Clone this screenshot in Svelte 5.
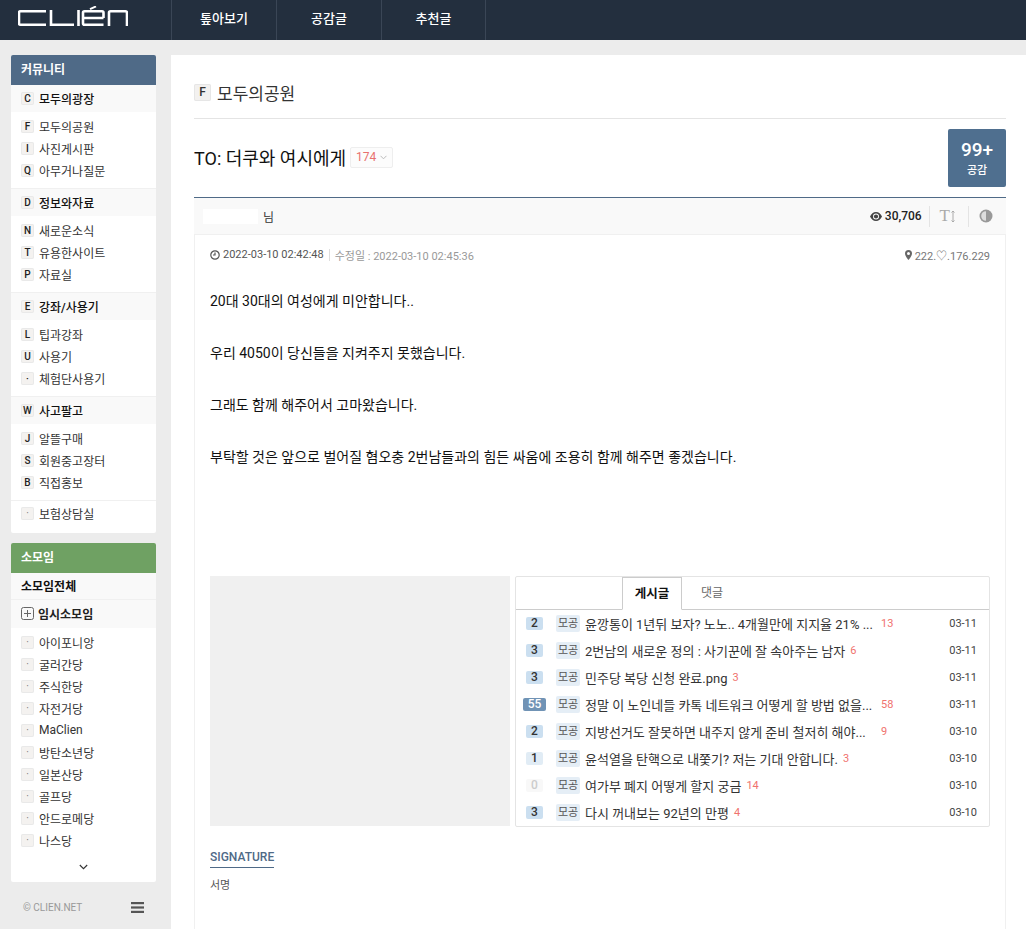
<script>
	const sections = [
		{ head: ['C', '모두의광장'], items: [['F', '모두의공원'], ['I', '사진게시판'], ['Q', '아무거나질문']] },
		{ head: ['D', '정보와자료'], items: [['N', '새로운소식'], ['T', '유용한사이트'], ['P', '자료실']] },
		{ head: ['E', '강좌/사용기'], items: [['L', '팁과강좌'], ['U', '사용기'], ['·', '체험단사용기']] },
		{ head: ['W', '사고팔고'], items: [['J', '알뜰구매'], ['S', '회원중고장터'], ['B', '직접홍보']] }
	];
	const somoim = ['아이포니앙', '굴러간당', '주식한당', '자전거당', 'MaClien', '방탄소년당', '일본산당', '골프당', '안드로메당', '나스당'];
	const paragraphs = [
		'20대 30대의 여성에게 미안합니다..',
		'우리 4050이 당신들을 지켜주지 못했습니다.',
		'그래도 함께 해주어서 고마왔습니다.',
		'부탁할 것은 앞으로 벌어질 혐오충 2번남들과의 힘든 싸움에 조용히 함께 해주면 좋겠습니다.'
	];
	const posts = [
		{ n: 2, lv: 'b', title: '윤깡통이 1년뒤 보자? 노노.. 4개월만에 지지율 21% ...', c: 13, date: '03-11', cut: true },
		{ n: 3, lv: 'b', title: '2번남의 새로운 정의 : 사기꾼에 잘 속아주는 남자', c: 6, date: '03-11' },
		{ n: 3, lv: 'b', title: '민주당 복당 신청 완료.png', c: 3, date: '03-11' },
		{ n: 55, lv: 'd', title: '정말 이 노인네들 카톡 네트워크 어떻게 할 방법 없을...', c: 58, date: '03-11', cut: true },
		{ n: 2, lv: 'b', title: '지방선거도 잘못하면 내주지 않게 준비 철저히 해야...', c: 9, date: '03-10', cut: true },
		{ n: 1, lv: 'a', title: '윤석열을 탄핵으로 내쫓기? 저는 기대 안합니다.', c: 3, date: '03-10' },
		{ n: 0, lv: 'z', title: '여가부 폐지 어떻게 할지 궁금', c: 14, date: '03-10' },
		{ n: 3, lv: 'b', title: '다시 꺼내보는 92년의 만평', c: 4, date: '03-10' }
	];
</script>

<header class="top">
	<a class="logo" href="/" aria-label="CLIEN">
		<svg width="110" height="28" viewBox="0 0 110 28" fill="none" stroke="#fff" stroke-width="2.600">
			<path d="M28 5.300H2.500a1.500 1.500 0 0 0-1.500 1.500v10.400a1.500 1.500 0 0 0 1.500 1.500H28" />
			<path d="M33 4v14.700H56" />
			<path d="M60.500 4v16" />
			<path d="M65 12H85.500M85.500 18.700H66.500a1.500 1.500 0 0 1-1.500-1.500V6.800a1.500 1.500 0 0 1 1.500-1.500H84a1.500 1.500 0 0 1 1.500 1.500V12" />
			<path d="M72 3.200 78 .4" stroke-width="2" />
			<path d="M91 20V6.800a1.500 1.500 0 0 1 1.500-1.500h15a1.500 1.500 0 0 1 1.500 1.500V20" />
		</svg>
	</a>
	<nav class="menu">
		<a href="/">톺아보기</a>
		<a href="/">공감글</a>
		<a href="/">추천글</a>
	</nav>
</header>

<div class="page">
	<aside class="side">
		<div class="card">
			<h3 class="card-head blue">커뮤니티</h3>
			{#each sections as s}
				<div class="group"><span class="key">{s.head[0]}</span>{s.head[1]}</div>
				<ul class="links">
					{#each s.items as it}
						<li><span class="key">{it[0]}</span>{it[1]}</li>
					{/each}
				</ul>
			{/each}
			<ul class="links last">
				<li><span class="key dot">·</span>보험상담실</li>
			</ul>
		</div>

		<div class="card second">
			<h3 class="card-head green">소모임</h3>
			<div class="group all">소모임전체</div>
			<div class="group temp">
				<svg width="13" height="13" viewBox="0 0 13 13" fill="none" stroke="#666" stroke-width="1">
					<rect x="0.500" y="0.500" width="12" height="12" rx="2" />
					<path d="M6.500 3v7M3 6.500h7" />
				</svg>
				임시소모임
			</div>
			<ul class="links so">
				{#each somoim as name}
					<li><span class="key dot">·</span>{name}</li>
				{/each}
			</ul>
			<div class="more">
				<svg width="9" height="6" viewBox="0 0 9 6" fill="none" stroke="#333" stroke-width="1.100">
					<path d="M.8 1l3.700 3.700L8.200 1" />
				</svg>
			</div>
		</div>

		<div class="side-foot">
			<span>© CLIEN.NET</span>
			<svg width="13" height="11" viewBox="0 0 13 11" fill="#555">
				<rect width="13" height="2.200" /><rect y="4.400" width="13" height="2.200" /><rect y="8.800" width="13" height="2.200" />
			</svg>
		</div>
	</aside>

	<main class="main">
		<div class="board"><span class="board-key">F</span>모두의공원</div>

		<div class="title-row">
			<h1>TO: 더쿠와 여시에게</h1>
			<span class="cmt-count">174
				<svg width="7" height="5" viewBox="0 0 7 5" fill="none" stroke="#bbb" stroke-width="1"><path d="M.5.8l3 3 3-3" /></svg>
			</span>
			<div class="like"><b>99+</b><span>공감</span></div>
		</div>

		<div class="author-bar">
			<span class="nick"><i class="nick-mask"></i>님</span>
			<span class="views">
				<svg width="12" height="9" viewBox="0 0 12 9"><path d="M6 0C3.300 0 1.200 1.800 0 4.500 1.200 7.200 3.300 9 6 9s4.800-1.800 6-4.500C10.800 1.800 8.700 0 6 0z" fill="#444" /><circle cx="6" cy="4.500" r="3" fill="#fff" /><circle cx="6" cy="4.500" r="2.100" fill="#444" /></svg>
				30,706
			</span>
			<span class="tool tool-t">T
				<svg width="4" height="13" viewBox="0 0 4 13" fill="none" stroke="#aaa" stroke-width="1"><path d="M2 1v11M.5 2.500 2 1l1.500 1.500M.5 10.500 2 12l1.500-1.500" /></svg>
			</span>
			<span class="tool">
				<svg width="14" height="14" viewBox="0 0 14 14"><circle cx="7" cy="7" r="6.500" fill="#999" /><path d="M7 2.200a4.800 4.800 0 0 0 0 9.600z" fill="#ddd" /></svg>
			</span>
		</div>

		<article class="body">
			<div class="meta">
				<span class="time">
					<svg width="10" height="10" viewBox="0 0 10 10" fill="none" stroke="#555" stroke-width="1.200"><circle cx="5" cy="5" r="4.200" /><path d="M5 2.500V5H3" /></svg>
					2022-03-10 02:42:48
				</span>
				<span class="edited">수정일 : 2022-03-10 02:45:36</span>
				<span class="ip">
					<svg width="7" height="10" viewBox="0 0 7 10"><path d="M3.500 0A3.500 3.500 0 0 0 0 3.500C0 6 3.500 10 3.500 10S7 6 7 3.500A3.500 3.500 0 0 0 3.500 0zm0 5a1.500 1.500 0 1 1 0-3 1.500 1.500 0 0 1 0 3z" fill="#666" /></svg>
					222.♡.176.229
				</span>
			</div>

			<div class="text">
				{#each paragraphs as p}
					<p>{p}</p>
				{/each}
			</div>

			<div class="lower">
				<div class="ad"></div>
				<section class="panel">
					<div class="tabs">
						<span class="tab on">게시글</span>
						<span class="tab">댓글</span>
					</div>
					<ul class="posts">
						{#each posts as post}
							<li>
								<span class="lv-cell"><span class="lv {post.lv}">{post.n}</span></span>
								<span class="tag">모공</span>
								<span class="ttl" class:cut={post.cut}>{post.title}</span>
								<span class="cnt" class:wide={post.cut}>{post.c}</span>
								<span class="date">{post.date}</span>
							</li>
						{/each}
					</ul>
				</section>
			</div>

			<div class="signature">
				<h4>SIGNATURE</h4>
				<p>서명</p>
			</div>
		</article>
	</main>
</div>

<style>
	:global(body) {
		margin: 0;
		background: #ececec;
		font-family: Roboto, "Noto Sans CJK KR", sans-serif;
		color: #222;
		font-size: 12px;
	}

	a {
		color: inherit;
		text-decoration: none;
	}

	ul {
		list-style: none;
		margin: 0;
		padding: 0;
	}

	.top {
		display: flex;
		height: 40px;
		background: #232f3e;
		color: #fff;
	}

	.logo {
		display: flex;
		align-items: center;
		width: 172px;
		padding-left: 18px;
		box-sizing: border-box;
		border-right: 1px solid #3a4656;
	}

	.menu {
		display: flex;
	}

	.menu a {
		width: 105px;
		height: 40px;
		box-sizing: border-box;
		line-height: 37px;
		text-align: center;
		font-size: 13px;
		font-weight: 500;
		border-right: 1px solid #3a4656;
	}

	.menu a:last-child {
		width: 104px;
	}

	.page {
		display: flex;
		align-items: flex-start;
		padding-top: 15px;
	}

	.side {
		width: 145px;
		margin: 0 15px 0 11px;
		flex: none;
	}

	.card {
		background: #fff;
		border-radius: 2px;
		overflow: hidden;
	}

	.second {
		margin-top: 10px;
	}

	.card-head {
		margin: 0;
		height: 30px;
		line-height: 30px;
		padding-left: 10px;
		color: #fff;
		font-size: 12px;
		font-weight: 700;
	}

	.blue {
		background: #4f6a87;
	}

	.green {
		background: #6fa163;
	}

	.group {
		display: flex;
		align-items: center;
		height: 27px;
		box-sizing: border-box;
		padding: 0 0 1px 10px;
		background: #f9f9f9;
		font-weight: 500;
		font-size: 12px;
		color: #111;
	}

	.group + .links {
		padding: 3px 0 7px;
		border-bottom: 1px solid #f0f0f0;
	}

	.links li {
		display: flex;
		align-items: center;
		height: 22px;
		padding-left: 10px;
		font-size: 12px;
		color: #333;
	}

	.links.last {
		padding: 1px 0 9px;
	}

	.group + .links.so {
		padding: 3px 0 1px;
		border-bottom: 0;
	}

	.key {
		display: inline-block;
		width: 13px;
		height: 13px;
		line-height: 13px;
		margin-right: 5px;
		text-align: center;
		font-size: 10px;
		font-weight: 500;
		color: #222;
		background: #f4f2f0;
		border-radius: 2px;
		box-shadow: inset 0 0 0 1px #e9e9e9;
		flex: none;
	}

	.dot {
		color: #777;
		font-weight: 400;
	}

	.all {
		border-bottom: 1px solid #f0f0f0;
		font-weight: 700;
	}

	.temp {
		height: 28px;
		gap: 4px;
		font-weight: 700;
		color: #222;
	}

	.more {
		display: flex;
		justify-content: center;
		align-items: center;
		height: 30px;
		box-sizing: border-box;
	}

	.side-foot {
		display: flex;
		justify-content: space-between;
		align-items: center;
		padding: 20px 12px 0 12px;
		color: #999;
		font-size: 10px;
	}

	.main {
		flex: 1;
		background: #fff;
		padding: 0 20px 0 23px;
		min-height: 874px;
		box-sizing: border-box;
	}

	.board {
		display: flex;
		align-items: center;
		height: 64px;
		border-bottom: 1px solid #e4e4e4;
		font-size: 17px;
		color: #333;
		padding-top: 12px;
		box-sizing: border-box;
	}

	.board-key {
		width: 17px;
		height: 17px;
		line-height: 17px;
		margin-right: 6px;
		background: #f3f1ef;
		border-radius: 2px;
		box-shadow: inset 0 0 0 1px #e6e6e6;
		text-align: center;
		font-size: 12px;
		font-weight: 500;
	}

	.title-row {
		display: flex;
		align-items: center;
		height: 79px;
		border-bottom: 1px solid #4f6a87;
		box-sizing: border-box;
	}

	h1 {
		margin: 0 0 2px;
		font-size: 18px;
		font-weight: 400;
		color: #111;
	}

	.cmt-count {
		display: inline-flex;
		align-items: center;
		justify-content: center;
		gap: 4px;
		margin: 0 0 2px 4px;
		width: 43px;
		height: 21px;
		box-sizing: border-box;
		border: 1px solid #eee;
		border-radius: 2px;
		background: #fcfcfc;
		font-size: 12px;
		color: #e8716e;
	}

	.like {
		display: flex;
		flex-direction: column;
		align-items: center;
		justify-content: center;
		width: 58px;
		height: 58px;
		margin-left: auto;
		background: #4f6f8f;
		border-radius: 2px;
		color: #fff;
	}

	.like b {
		font-size: 19px;
		font-weight: 500;
		line-height: 24px;
	}

	.like span {
		font-size: 11px;
		font-weight: 500;
		line-height: 17px;
	}

	.author-bar {
		display: flex;
		align-items: center;
		height: 36px;
		background: #f9f9f9;
		border-bottom: 1px solid #f0f0f0;
		font-size: 12px;
	}

	.nick {
		display: flex;
		align-items: center;
		margin-left: 9px;
		margin-right: auto;
		color: #333;
	}

	.nick-mask {
		width: 55px;
		height: 15px;
		margin-right: 5px;
		background: #fff;
	}

	.views {
		display: flex;
		align-items: center;
		gap: 3px;
		font-weight: 500;
		color: #222;
		margin-right: 7px;
	}

	.tool {
		display: flex;
		align-items: center;
		height: 21px;
		border-left: 1px solid #e4e4e4;
		padding: 0 13px 0 10px;
	}

	.tool-t {
		gap: 1px;
		font-family: "Liberation Serif", serif;
		font-size: 17px;
		color: #aaa;
	}

	.body {
		border: 1px solid #f0f0f0;
		border-top: 0;
		padding: 0 15px;
	}

	.meta {
		display: flex;
		align-items: center;
		height: 40px;
		font-size: 11px;
		color: #555;
	}

	.time {
		display: flex;
		align-items: center;
		gap: 3px;
		padding-right: 5px;
		border-right: 1px solid #ddd;
		line-height: 12px;
	}

	.edited {
		padding-left: 5px;
		color: #999;
	}

	.ip {
		display: flex;
		align-items: center;
		gap: 3px;
		margin-left: auto;
		color: #777;
	}

	.text {
		padding-top: 13px;
		height: 301px;
		box-sizing: border-box;
		font-size: 14px;
		color: #111;
	}

	.text p {
		margin: 0 0 26px;
		height: 26px;
		line-height: 26px;
	}

	.lower {
		display: flex;
		gap: 5px;
		align-items: flex-start;
	}

	.ad {
		width: 300px;
		height: 250px;
		background: #f0f0f0;
	}

	.panel {
		flex: 1;
		height: 251px;
		border: 1px solid #e4e4e4;
		border-radius: 2px;
		box-sizing: border-box;
		min-width: 0;
	}

	.tabs {
		display: flex;
		height: 33px;
		padding-left: 106px;
		border-bottom: 1px solid #ccc;
		box-sizing: border-box;
	}

	.tab {
		width: 60px;
		line-height: 32px;
		text-align: center;
		font-size: 12px;
		color: #666;
	}

	.tab.on {
		height: 33px;
		box-sizing: border-box;
		border: 1px solid #ccc;
		border-bottom: 1px solid #fff;
		line-height: 31px;
		font-size: 12.500px;
		font-weight: 700;
		color: #111;
	}

	.posts li {
		display: flex;
		align-items: center;
		height: 27px;
		padding-right: 12px;
		font-size: 13px;
		color: #333;
	}

	.lv-cell {
		display: flex;
		justify-content: center;
		width: 37px;
		flex: none;
		margin-right: 3px;
	}

	.lv {
		min-width: 17px;
		height: 13px;
		padding: 0 2px;
		box-sizing: border-box;
		line-height: 13px;
		border-radius: 2px;
		text-align: center;
		font-size: 12px;
		font-weight: 500;
		color: #333;
		background: #cbdff0;
	}

	.lv.a {
		background: #e1ecf5;
	}

	.lv.d {
		min-width: 23px;
		background: #7093b5;
		color: #fff;
	}

	.lv.z {
		background: #f8f8f8;
		color: #ccc;
	}

	.tag {
		width: 24px;
		height: 17px;
		line-height: 17px;
		margin-right: 5px;
		flex: none;
		text-align: center;
		font-size: 11px;
		color: #555;
		background: #e5eef6;
		border-radius: 2px;
	}

	.ttl {
		white-space: nowrap;
	}

	.ttl.cut {
		width: 286px;
	}

	.cnt {
		margin-left: 5px;
		font-size: 11px;
		color: #f0726e;
	}

	.cnt.wide {
		margin-left: 10px;
	}

	.date {
		margin-left: auto;
		font-size: 11px;
		color: #444;
	}

	.signature {
		padding-top: 23px;
		height: 120px;
	}

	.signature h4 {
		display: inline-block;
		margin: 0;
		padding-bottom: 3px;
		border-bottom: 1px solid #4f6a87;
		font-size: 12px;
		font-weight: 500;
		color: #4f6a87;
	}

	.signature p {
		margin: 8px 0 0;
		font-size: 11px;
		color: #555;
	}
</style>
